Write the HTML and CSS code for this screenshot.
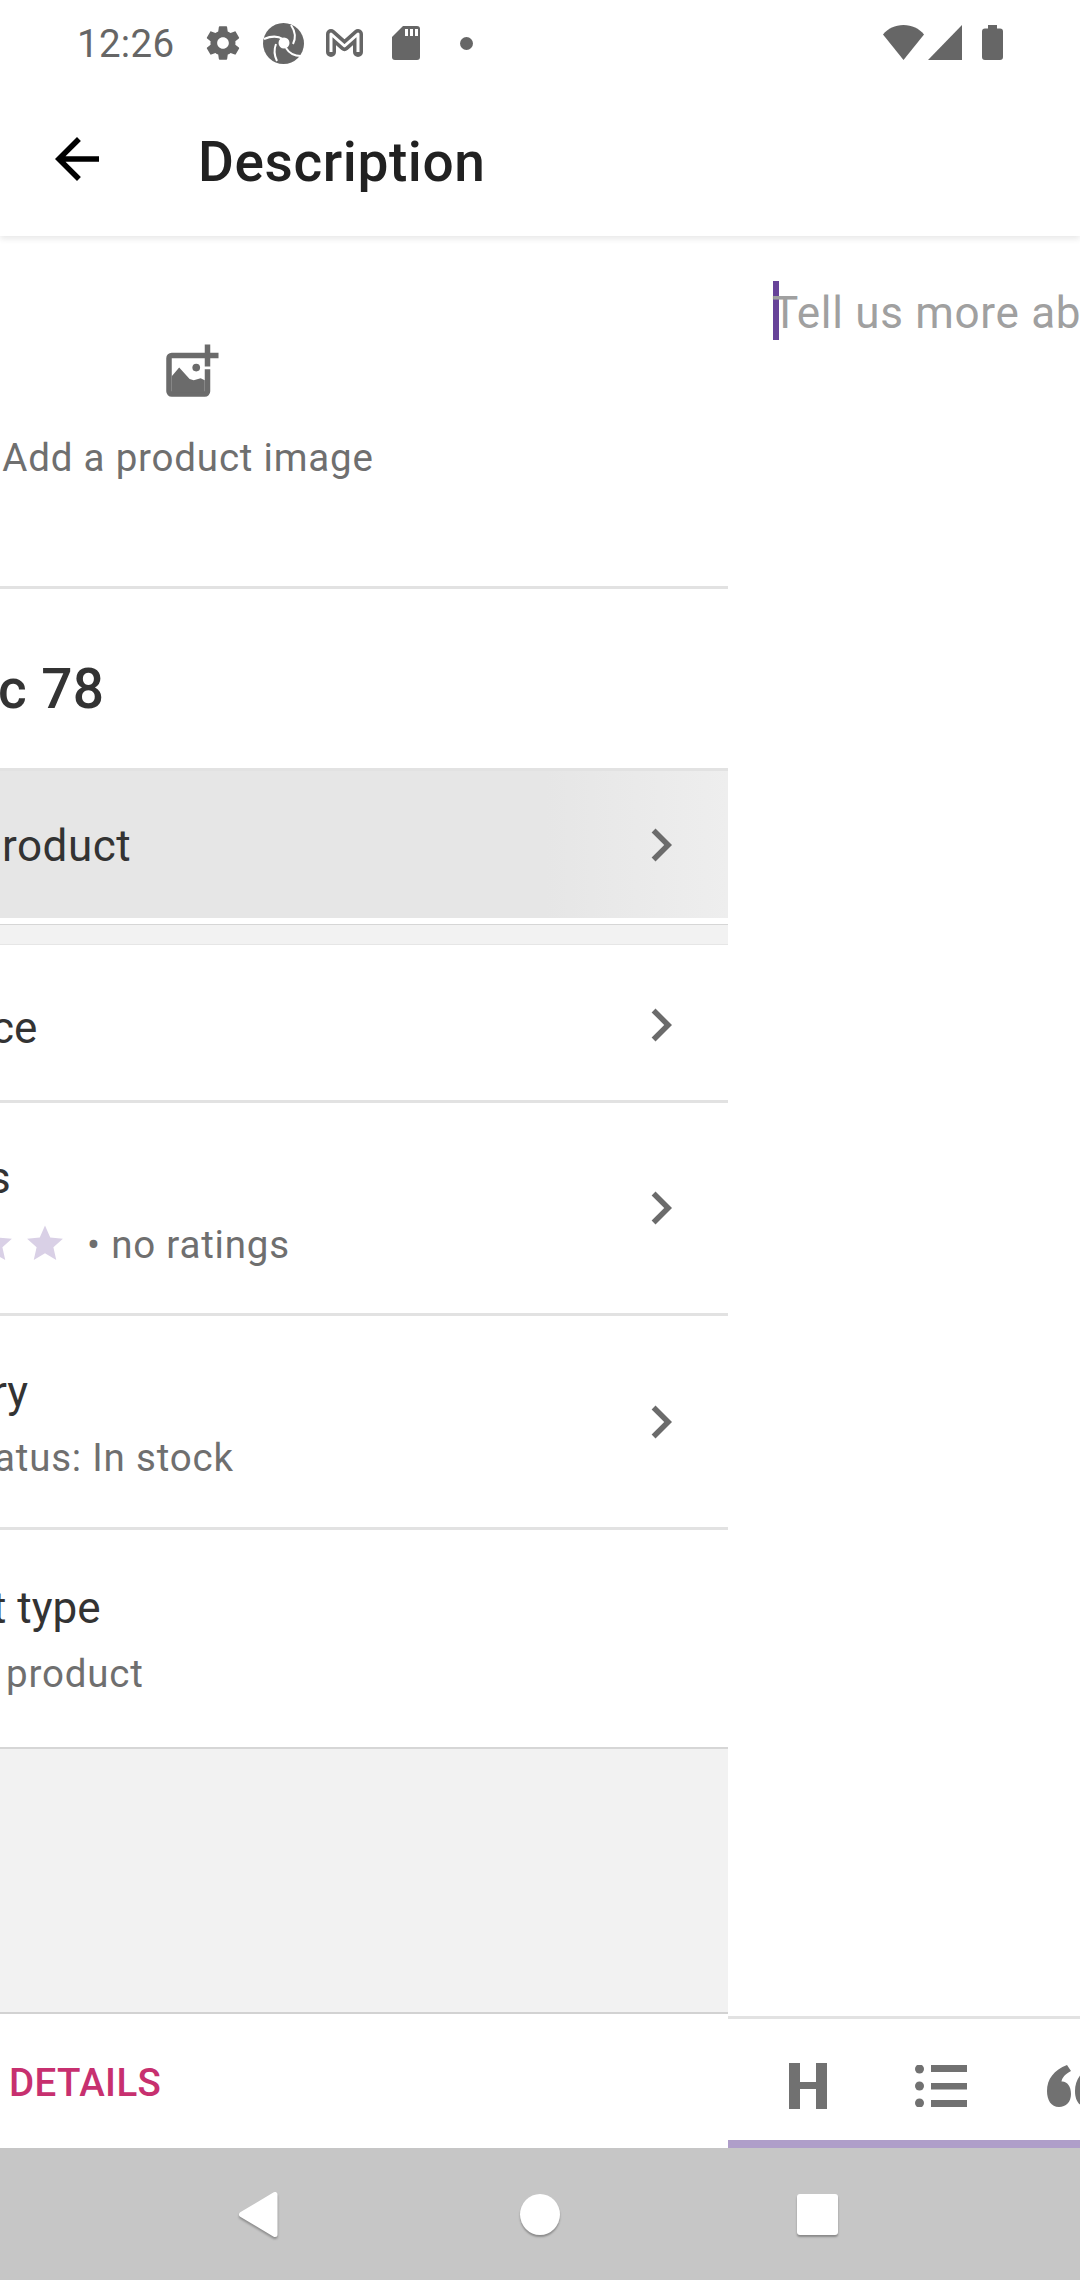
FILE: index.html
```html
<!DOCTYPE html>
<html lang="en">
<head>
    <meta charset="UTF-8">
    <title>Description</title>
    <link rel="stylesheet" href="styles.css">
</head>
<body>
    <div class="status-bar">
        <span class="time">12:26</span>
        <svg class="ic-gear" viewBox="0 0 24 24"><path d="M19.4 13c.04-.32.07-.65.07-1s-.03-.68-.07-1l2.1-1.65c.2-.15.25-.42.12-.64l-2-3.46c-.12-.22-.39-.3-.61-.22l-2.49 1c-.52-.4-1.08-.73-1.69-.98l-.38-2.65C14.46 2.18 14.25 2 14 2h-4c-.25 0-.46.18-.49.42l-.38 2.65c-.61.25-1.17.59-1.69.98l-2.49-1c-.23-.09-.49 0-.61.22l-2 3.46c-.13.22-.07.49.12.64L4.56 11c-.04.32-.07.66-.07 1s.03.68.07 1l-2.1 1.65c-.2.15-.25.42-.12.64l2 3.46c.12.22.39.3.61.22l2.49-1c.52.4 1.08.73 1.69.98l.38 2.65c.03.24.24.42.49.42h4c.25 0 .46-.18.49-.42l.38-2.65c.61-.25 1.17-.59 1.69-.98l2.49 1c.23.09.49 0 .61-.22l2-3.46c.12-.22.07-.49-.12-.64L19.4 13zM12 15.5c-1.93 0-3.5-1.57-3.5-3.5s1.57-3.5 3.5-3.5 3.5 1.57 3.5 3.5-1.57 3.5-3.5 3.5z"/></svg>
        <svg class="ic-logo" viewBox="0 0 41 41">
            <circle cx="20.5" cy="20.5" r="20.5"/>
            <path class="logo-cut" d="M28 2c4 6 5 13 2 19M1 16c7-3 14-3 19 0M14 38c-3-6-3-12-1-17M38 33c-6 0-12-3-15-8"/>
            <circle class="logo-eye" cx="21" cy="20" r="5.500"/>
        </svg>
        <svg class="ic-gmail" viewBox="0 0 37 29">
            <path class="gmail-outer" d="M5 24V6l13.500 12L32 6v18"/>
            <path class="gmail-inner" d="M5 24V6l13.500 12L32 6v18"/>
        </svg>
        <svg class="ic-sd" viewBox="0 0 28 34"><path d="M11 0h14a3 3 0 0 1 3 3v28a3 3 0 0 1-3 3H3a3 3 0 0 1-3-3V11z"/><path class="sd-pin" d="M13 3h3v7h-3zM18 3h3v7h-3zM23 3h3v7h-3z"/></svg>
        <span class="dot"></span>
        <span class="status-right">
            <svg class="ic-wifi" viewBox="0 0 41 35"><path d="M0 9.500C5 3.500 12 0 20.500 0S36 3.500 41 9.500L20.500 35z"/></svg>
            <svg class="ic-signal" viewBox="0 0 34 35"><path d="M34 0v35H0z"/></svg>
            <svg class="ic-battery" viewBox="0 0 21 35"><path d="M6 0h9v3.500h3a3 3 0 0 1 3 3V32a3 3 0 0 1-3 3H3a3 3 0 0 1-3-3V6.500a3 3 0 0 1 3-3h3z"/></svg>
        </span>
    </div>

    <header class="toolbar">
        <svg class="ic-back" viewBox="0 0 24 24"><path d="M20 11H7.830l5.590-5.590L12 4l-8 8 8 8 1.410-1.410L7.830 13H20v-2z"/></svg>
        <h1 class="title">Description</h1>
    </header>

    <main class="panes">
        <section class="left-pane">
            <div class="image-block">
                <svg class="ic-add-photo" viewBox="0 0 24 24">
                    <path d="M19 7v3h-2V7h-3V5h3V2h2v3h3v2zM5 5h9v2H5v12h12v-8h2v8a2 2 0 0 1-2 2H5a2 2 0 0 1-2-2V7a2 2 0 0 1 2-2z"/>
                    <path d="M5 13.500l2.700-3.100 3.800 4.100 1.500.5 2.500-.7 1.500.7v4.500H5z"/>
                    <circle cx="13.900" cy="10.400" r="1.400"/>
                </svg>
                <span class="image-label">Add a product image</span>
            </div>

            <div class="name-block"><span class="name">c 78</span></div>

            <div class="row row-selected">
                <div class="row-text"><span class="row-title cut-r">roduct</span></div>
                <svg class="chevron" viewBox="0 0 24 24"><path d="M10 6L8.590 7.410 13.170 12l-4.580 4.590L10 18l6-6z"/></svg>
            </div>
            <div class="gap-band"></div>

            <div class="row row-price">
                <div class="row-text"><span class="row-title cut-ce">ce</span></div>
                <svg class="chevron" viewBox="0 0 24 24"><path d="M10 6L8.590 7.410 13.170 12l-4.580 4.590L10 18l6-6z"/></svg>
            </div>

            <div class="row row-tall row-reviews">
                <div class="row-text">
                    <span class="row-title cut-s">s</span>
                    <div class="rating">
                        <svg class="star star-cut" viewBox="0 0 24 24"><path d="M12 1l3.300 7.600 8 .7-6 5.400 1.800 8.100L12 18.500 4.900 22.800l1.800-8.100-6-5.400 8-.7z"/></svg>
                        <svg class="star" viewBox="0 0 24 24"><path d="M12 1l3.300 7.600 8 .7-6 5.400 1.800 8.100L12 18.500 4.900 22.800l1.800-8.100-6-5.400 8-.7z"/></svg>
                        <span class="row-sub rating-note">• no ratings</span>
                    </div>
                </div>
                <svg class="chevron" viewBox="0 0 24 24"><path d="M10 6L8.590 7.410 13.170 12l-4.580 4.590L10 18l6-6z"/></svg>
            </div>

            <div class="row row-tall">
                <div class="row-text">
                    <span class="row-title cut-ry">ry</span>
                    <span class="row-sub cut-atus">atus: In stock</span>
                </div>
                <svg class="chevron" viewBox="0 0 24 24"><path d="M10 6L8.590 7.410 13.170 12l-4.580 4.590L10 18l6-6z"/></svg>
            </div>

            <div class="row row-type">
                <div class="row-text">
                    <span class="row-title cut-t">t type</span>
                    <span class="row-sub cut-product">product</span>
                </div>
            </div>

            <div class="filler"></div>

            <div class="tab-bar"><span class="tab-label">DETAILS</span></div>
        </section>

        <section class="right-pane">
            <div class="editor">
                <span class="cursor"></span>
                <span class="placeholder">Tell us more ab</span>
            </div>
            <div class="format-bar">
                <svg class="ic-heading" viewBox="0 0 38 46"><path d="M0 0h11v19h16V0h11v46H27V26H11v20H0z"/></svg>
                <svg class="ic-list" viewBox="0 0 52 42">
                    <circle cx="4.500" cy="4" r="4.500"/><circle cx="4.500" cy="21" r="4.500"/><circle cx="4.500" cy="38" r="4.500"/>
                    <path d="M16 0h36v7H16zM16 18h36v6.500H16zM16 35h36v7H16z"/>
                </svg>
                <svg class="ic-quote" viewBox="0 0 33 42">
                    <path d="M20 0l4 6c-6 3-9 7-9.500 10.500C20 16 24 21 24 29c0 8-5 13-12 13C4 42 0 35 0 26 0 14 7 5 20 0z"/>
                    <path d="M48 0l4 6c-6 3-9 7-9.500 10.500C48 16 52 21 52 29c0 8-5 13-12 13-8 0-12-7-12-16C28 14 35 5 48 0z"/>
                </svg>
            </div>
        </section>
    </main>

    <nav class="nav-bar">
        <svg class="nav-back" viewBox="0 0 39 45"><path d="M36 2.500v40L2.500 22.500z"/></svg>
        <span class="nav-home"></span>
        <span class="nav-recent"></span>
    </nav>
</body>
</html>
```

FILE: styles.css
```css
html, body {
    margin: 0;
    padding: 0;
}

body {
    width: 1080px;
    height: 2280px;
    overflow: hidden;
    display: flex;
    flex-direction: column;
    background: #fff;
    font-family: Roboto, "Liberation Sans", sans-serif;
}

svg {
    display: block;
    flex: none;
    fill: currentColor;
}

/* status bar */
.status-bar {
    height: 80px;
    flex: none;
    display: flex;
    align-items: center;
    padding: 0 77px;
    color: #666;
    background: #fff;
    position: relative;
    z-index: 3;
}

.time {
    font-size: 38.5px;
    letter-spacing: 0.3px;
    width: 130px;
    flex: none;
    margin-top: 6px;
}

.ic-gear { width: 40px; height: 40px; margin-left: -4px; margin-right: 20px; margin-top: 6px; }
.ic-logo { width: 41px; height: 41px; margin-top: 6px; margin-right: 22px; }
.ic-gmail { width: 37px; height: 29px; margin-top: 5px; margin-right: 29px; }
.ic-sd { width: 28px; height: 34px; margin-top: 6px; margin-right: 40px; }
.ic-wifi { width: 41px; height: 35px; }
.ic-signal { width: 34px; height: 35px; }
.ic-battery { width: 21px; height: 35px; }

.logo-cut {
    fill: none;
    stroke: #fff;
    stroke-width: 2px;
}

.logo-eye { fill: #fff; }

.gmail-outer,
.gmail-inner {
    fill: none;
    stroke-linejoin: round;
}

.gmail-outer {
    stroke: #666;
    stroke-width: 10px;
    stroke-linecap: round;
}

.gmail-inner {
    stroke: #fff;
    stroke-width: 3px;
}

.sd-pin { fill: #fff; }

.dot {
    width: 13px;
    height: 13px;
    border-radius: 50%;
    background: #666;
    margin-top: 6px;
}

.status-right {
    margin-left: auto;
    display: flex;
    gap: 4px;
    margin-top: 5px;
}

.status-right .ic-battery { margin-left: 16px; }

/* toolbar */
.toolbar {
    height: 156px;
    flex: none;
    display: flex;
    align-items: center;
    color: #212121;
    background: #fff;
    box-shadow: 0 3px 6px rgba(0, 0, 0, 0.09);
    position: relative;
    z-index: 2;
}

.ic-back {
    width: 66px;
    height: 66px;
    margin-left: 44px;
    margin-top: 2px;
    color: #000;
}

.title {
    margin: 8px 0 0 88px;
    font-size: 55px;
    font-weight: 500;
    letter-spacing: 0.6px;
    color: #212121;
}

/* panes */
.panes {
    flex: 1;
    display: flex;
    min-height: 0;
}

.left-pane {
    width: 728px;
    flex: none;
    display: flex;
    flex-direction: column;
    overflow: hidden;
    background: #fff;
}

.image-block {
    height: 350px;
    flex: none;
    box-sizing: content-box;
    border-bottom: 3px solid #e2e2e2;
    display: flex;
    flex-direction: column;
    align-items: center;
    width: 376px;
    padding-right: 352px;
    color: #6b6b6b;
}

.ic-add-photo {
    width: 66px;
    height: 66px;
    margin-top: 103px;
    margin-left: 5px;
    flex: none;
}

.image-label {
    margin-top: 30px;
    font-size: 38.5px;
    letter-spacing: 0.8px;
    white-space: nowrap;
    color: #6f6f6f;
}

.name-block {
    height: 179px;
    flex: none;
    display: flex;
    align-items: center;
}

.name {
    font-size: 55px;
    font-weight: 500;
    letter-spacing: 0.4px;
    color: #333;
    margin-left: -2px;
    margin-top: 20px;
}

.row {
    flex: none;
    display: flex;
    align-items: center;
    justify-content: space-between;
    padding-right: 34px;
    background: #fff;
    color: #6b6b6b;
}

.row-selected {
    height: 150px;
    box-sizing: border-box;
    border-top: 3px solid #e2e2e2;
    background: linear-gradient(90deg, #e6e6e6 75%, #eeeeee 100%);
}

.gap-band {
    height: 21px;
    flex: none;
    margin-top: 6px;
    box-sizing: border-box;
    background: #f2f2f2;
    border-top: 1px solid #d6d6d6;
    border-bottom: 1px solid #e6e6e6;
}

.row-price {
    height: 158px;
    box-sizing: border-box;
    padding-top: 4px;
    border-bottom: 3px solid #e2e2e2;
}

.row-tall {
    height: 214px;
    box-sizing: border-box;
    border-bottom: 3px solid #e2e2e2;
}

.row-reviews { height: 213px; }

.row-type {
    height: 217px;
}

.row-text {
    display: flex;
    flex-direction: column;
    gap: 17px;
    min-width: 0;
}

.row-title {
    font-size: 44px;
    color: #333;
    white-space: nowrap;
}

.row-sub {
    font-size: 38.5px;
    letter-spacing: 0.8px;
    color: #6f6f6f;
    white-space: nowrap;
}

.cut-r { margin-left: 2px; letter-spacing: 0.5px; margin-top: 2px; }
.cut-ce { margin-left: -9px; margin-top: 6px; }
.cut-s { margin-left: -12px; }
.cut-ry { margin-left: -8px; }
.cut-atus { margin-left: -6px; }
.cut-t { margin-left: -8px; }
.cut-product { margin-left: 6px; }

.row-tall .row-text { padding-top: 3px; }

.chevron {
    width: 66px;
    height: 66px;
    color: #6b6b6b;
}

.rating {
    display: flex;
    align-items: center;
    height: 46px;
}

.star {
    width: 38px;
    height: 38px;
    margin-top: -3px;
    color: #d9d0e6;
}

.star-cut { margin-left: -25px; margin-right: 13px; }

.rating-note { margin-left: 23px; }

.filler {
    flex: 1;
    box-sizing: border-box;
    background: #f2f2f2;
    border-top: 2px solid #d6d6d6;
    border-bottom: 2px solid #d2d2d2;
}

.tab-bar {
    height: 134px;
    flex: none;
    display: flex;
    align-items: center;
    background: #fff;
}

.tab-label {
    margin-left: 9px;
    margin-top: 2px;
    font-size: 38.5px;
    font-weight: 500;
    letter-spacing: 0.4px;
    color: #c7306f;
}

.right-pane {
    flex: 1;
    display: flex;
    flex-direction: column;
    background: #fff;
}

.editor {
    flex: 1;
    display: flex;
    align-items: flex-start;
    padding-top: 45px;
    padding-left: 45px;
    overflow: hidden;
}

.cursor {
    width: 6px;
    height: 59px;
    flex: none;
    background: #674399;
}

.placeholder {
    font-size: 44px;
    letter-spacing: 0.7px;
    color: #a0a0a0;
    white-space: nowrap;
    margin-left: -7px;
    margin-top: 6px;
}

.format-bar {
    height: 132px;
    flex: none;
    box-sizing: border-box;
    border-top: 3px solid #e2e2e2;
    border-bottom: 8px solid #af9ec9;
    padding-top: 12px;
    display: flex;
    align-items: center;
    color: #717171;
    overflow: hidden;
}

.ic-heading { width: 38px; height: 46px; margin-left: 61px; }
.ic-list { width: 52px; height: 42px; margin-left: 88px; }
.ic-quote { width: 33px; height: 42px; margin-left: 80px; }

/* nav bar */
.nav-bar {
    height: 132px;
    flex: none;
    display: flex;
    align-items: center;
    padding-left: 239px;
    background: #c6c6c6;
}

.nav-back {
    width: 39px;
    height: 45px;
    color: #fff;
    stroke: #fff;
    stroke-width: 5px;
    stroke-linejoin: round;
    filter: drop-shadow(0 2px 1px rgba(0, 0, 0, 0.3));
}

.nav-home {
    width: 40px;
    height: 41px;
    margin-left: 242px;
    border-radius: 50%;
    background: #fff;
    box-shadow: 0 2px 2px rgba(0, 0, 0, 0.3);
}

.nav-recent {
    width: 41px;
    height: 41px;
    margin-left: 237px;
    border-radius: 3px;
    background: #fff;
    box-shadow: 0 2px 2px rgba(0, 0, 0, 0.3);
}
```
